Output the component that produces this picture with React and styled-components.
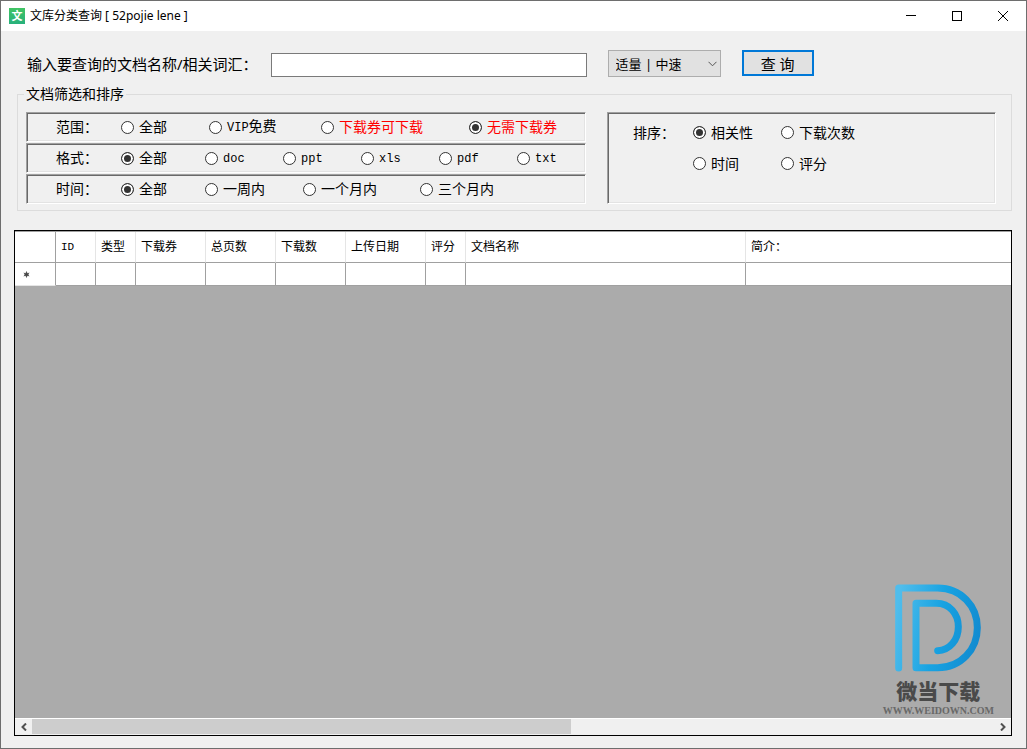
import React, { useState } from "react";
import styled, { createGlobalStyle } from "styled-components";

const scopeOptions = [
  { value: "all", label: "全部" },
  { value: "vip", latin: "VIP", label: "免费" },
  { value: "coupon", label: "下载券可下载", red: true },
  { value: "free", label: "无需下载券", red: true },
];

const formatOptions = [
  { value: "all", label: "全部" },
  { value: "doc", latin: "doc" },
  { value: "ppt", latin: "ppt" },
  { value: "xls", latin: "xls" },
  { value: "pdf", latin: "pdf" },
  { value: "txt", latin: "txt" },
];

const timeOptions = [
  { value: "all", label: "全部" },
  { value: "week", label: "一周内" },
  { value: "month", label: "一个月内" },
  { value: "quarter", label: "三个月内" },
];

const sortOptions = [
  { value: "relevance", label: "相关性" },
  { value: "downloads", label: "下载次数" },
  { value: "time", label: "时间" },
  { value: "score", label: "评分" },
];

const columns = [
  { title: "ID", width: 40, latin: true },
  { title: "类型", width: 40 },
  { title: "下载券", width: 70 },
  { title: "总页数", width: 70 },
  { title: "下载数", width: 70 },
  { title: "上传日期", width: 80 },
  { title: "评分", width: 40 },
  { title: "文档名称", width: 280 },
  { title: "简介：" },
];

export default function App() {
  const [keyword, setKeyword] = useState("");

  return (
    <>
      <GlobalStyle />
      <Window>
        <TitleBar />
        <Content>
          <SearchForm onSubmit={(e) => e.preventDefault()}>
            <SearchLabel htmlFor="keyword">
              输入要查询的文档名称/相关词汇：
            </SearchLabel>
            <SearchInput
              id="keyword"
              value={keyword}
              onChange={(e) => setKeyword(e.target.value)}
            />
            <SelectWrapper>
              <SpeedSelect aria-label="速度" defaultValue="normal">
                <option value="normal">适量 | 中速</option>
              </SpeedSelect>
              <SelectArrow viewBox="0 0 9 6">
                <path d="M0.5 0.8 L4.5 4.8 L8.5 0.8" />
              </SelectArrow>
            </SelectWrapper>
            <SearchButton type="submit">查 询</SearchButton>
          </SearchForm>

          <Filters>
            <Legend>文档筛选和排序</Legend>
            <FilterColumns>
              <FilterList>
                <FilterRow
                  name="scope"
                  label="范围："
                  options={scopeOptions}
                  initial="free"
                  tracks="65px 88px 112px 148px auto"
                />
                <FilterRow
                  name="format"
                  label="格式："
                  options={formatOptions}
                  initial="all"
                  tracks="65px 84px repeat(4, 78px) auto"
                />
                <FilterRow
                  name="time"
                  label="时间："
                  options={timeOptions}
                  initial="all"
                  tracks="65px 84px 98px 117px auto"
                />
              </FilterList>
              <SortPanel role="radiogroup" aria-label="排序">
                <RowLabel>排序：</RowLabel>
                <SortOptions>
                  <RadioList
                    name="sort"
                    options={sortOptions}
                    initial="relevance"
                  />
                </SortOptions>
              </SortPanel>
            </FilterColumns>
          </Filters>

          <ResultGrid />
        </Content>
      </Window>
    </>
  );
}

function TitleBar() {
  return (
    <Bar>
      <AppIcon>文</AppIcon>
      <Title>文库分类查询 [ 52pojie lene ]</Title>
      <WindowButton aria-label="最小化">
        <Glyph viewBox="0 0 10 10">
          <path d="M0 4.5 H10" />
        </Glyph>
      </WindowButton>
      <WindowButton aria-label="最大化">
        <Glyph viewBox="0 0 10 10">
          <rect x="0.5" y="0.5" width="9" height="9" />
        </Glyph>
      </WindowButton>
      <WindowButton aria-label="关闭">
        <Glyph viewBox="0 0 10 10">
          <path d="M0 0 L10 10 M10 0 L0 10" />
        </Glyph>
      </WindowButton>
    </Bar>
  );
}

function FilterRow({ name, label, options, initial, tracks }) {
  return (
    <FilterPanel role="radiogroup" aria-label={label} $tracks={tracks}>
      <RowLabel>{label}</RowLabel>
      <RadioList name={name} options={options} initial={initial} />
    </FilterPanel>
  );
}

function RadioList({ name, options, initial }) {
  const [selected, setSelected] = useState(initial);

  return options.map((option) => (
    <RadioLabel key={option.value} $red={option.red}>
      <Radio
        type="radio"
        name={name}
        value={option.value}
        checked={selected === option.value}
        onChange={() => setSelected(option.value)}
      />
      <span>
        {option.latin && <Latin>{option.latin}</Latin>}
        {option.label}
      </span>
    </RadioLabel>
  ));
}

function ResultGrid() {
  return (
    <GridFrame>
      <Table>
        <colgroup>
          <Col $width={41} />
          {columns.map((column) => (
            <Col key={column.title} $width={column.width} />
          ))}
        </colgroup>
        <thead>
          <tr>
            <HeadCell $corner />
            {columns.map((column) => (
              <HeadCell key={column.title} $latin={column.latin}>
                {column.title}
              </HeadCell>
            ))}
          </tr>
        </thead>
        <tbody>
          <tr>
            <Cell $rowHeader>
              <NewRowMark viewBox="0 0 7 7">
                <path d="M3.5 0.5 V6.5 M0.8 2 L6.2 5 M6.2 2 L0.8 5" />
                <circle cx="3.5" cy="3.5" r="1.6" />
              </NewRowMark>
            </Cell>
            {columns.map((column) => (
              <Cell key={column.title} />
            ))}
          </tr>
        </tbody>
      </Table>
      <GridSpace />
      <ScrollBar>
        <ScrollButton aria-label="向左滚动">
          <ScrollArrow viewBox="0 0 6 8">
            <path d="M5 0.5 L1.5 4 L5 7.5" />
          </ScrollArrow>
        </ScrollButton>
        <ScrollTrack>
          <ScrollThumb />
        </ScrollTrack>
        <ScrollButton aria-label="向右滚动">
          <ScrollArrow viewBox="0 0 6 8">
            <path d="M1 0.5 L4.5 4 L1 7.5" />
          </ScrollArrow>
        </ScrollButton>
      </ScrollBar>
      <Watermark>
        <Logo viewBox="76 43 258 262">
          <defs>
            <linearGradient
              id="logoBlue"
              gradientUnits="userSpaceOnUse"
              x1="76"
              y1="140"
              x2="334"
              y2="190"
            >
              <stop offset="0" stopColor="#50bdec" />
              <stop offset="0.5" stopColor="#18a3e2" />
              <stop offset="1" stopColor="#128bd0" />
            </linearGradient>
          </defs>
          <path d="M87 294 V54 H204 C274 54 323 108 323 173 C323 238 274 293 204 293 H139 V100 H200 C240 100 266 132 266 170 C266 210 240 241 204 242" />
        </Logo>
        <BrandName>微当下载</BrandName>
        <BrandUrl>WWW.WEIDOWN.COM</BrandUrl>
      </Watermark>
    </GridFrame>
  );
}

// STYLES
const GlobalStyle = createGlobalStyle`
  * {
    box-sizing: border-box;
  }

  body {
    margin: 0;
    background: #f0f0f0;
    color: #000;
    font-family: "Noto Sans", "Noto Sans CJK SC", sans-serif;
    font-size: 14px;
    line-height: 16px;
  }

  button, input, select {
    margin: 0;
    font-family: inherit;
    color: inherit;
  }
`;

const Window = styled.div`
  min-height: 100vh;
  display: flex;
  flex-direction: column;
  border: 1px solid #6e6e6e;
`;

// STYLES - TitleBar
const Bar = styled.header`
  display: flex;
  align-items: center;
  height: 30px;
  padding-left: 8px;
  background: #fff;
`;

const AppIcon = styled.span`
  width: 16px;
  height: 16px;
  margin-right: 5px;
  background: linear-gradient(#40c463, #27b07c);
  color: #fff;
  font-size: 11px;
  font-weight: bold;
  text-align: center;
`;

const Title = styled.h1`
  flex: 1;
  margin: 0;
  font-size: 12px;
  font-weight: normal;
`;

const WindowButton = styled.button`
  display: flex;
  align-items: center;
  justify-content: center;
  width: 46px;
  height: 28px;
  padding: 0;
  border: none;
  background: none;
`;

const Glyph = styled.svg`
  width: 10px;
  height: 10px;
  fill: none;
  stroke: #000;
`;

const Content = styled.main`
  flex: 1;
  display: flex;
  flex-direction: column;
  padding: 19px 14px 12px 13px;
`;

// STYLES - SearchForm
const SearchForm = styled.form`
  display: flex;
  align-items: center;
  gap: 21px;
  height: 27px;
  padding-left: 13px;
`;

const SearchLabel = styled.label`
  flex: none;
  font-size: 15px;
  margin-right: -8px;
`;

const SearchInput = styled.input`
  flex: 0 1 316px;
  align-self: flex-end;
  min-width: 80px;
  height: 24px;
  padding: 0 4px;
  border: 1px solid #7a7a7a;
  background: #fff;
  font-size: 14px;
  outline: none;
`;

const SelectWrapper = styled.div`
  position: relative;
  flex: none;
`;

const SpeedSelect = styled.select`
  appearance: none;
  display: block;
  width: 113px;
  height: 27px;
  padding: 0 20px 0 7px;
  border: 1px solid #adadad;
  border-radius: 0;
  background: #e1e1e1;
  font-size: 13px;
`;

const SelectArrow = styled.svg`
  position: absolute;
  top: 11px;
  right: 4px;
  width: 9px;
  height: 6px;
  fill: none;
  stroke: #555;
  pointer-events: none;
`;

const SearchButton = styled.button`
  flex: none;
  align-self: flex-start;
  width: 72px;
  height: 26px;
  padding: 0;
  border: 2px solid #0078d7;
  background: #e1e1e1;
  font-size: 15px;
`;

// STYLES - Filters
const Filters = styled.fieldset`
  min-width: 0;
  margin: 9px 0 19px 3px;
  padding: 10px 15px 6px 8px;
  border: 1px solid #dcdcdc;
`;

const Legend = styled.legend`
  margin-left: -2px;
  padding: 0 2px;
`;

const FilterColumns = styled.div`
  display: flex;
  gap: 21px;
`;

const FilterList = styled.div`
  flex: none;
  width: 560px;
  display: flex;
  flex-direction: column;
  gap: 1px;
`;

const SunkenPanel = styled.div`
  border: 1px solid;
  border-color: #a0a0a0 #fff #fff #a0a0a0;
  box-shadow: inset 1px 1px #696969, inset -1px -1px #e3e3e3;
`;

const FilterPanel = styled(SunkenPanel)`
  display: grid;
  grid-template-columns: ${(props) => props.$tracks};
  align-items: center;
  height: 30px;
  padding-left: 29px;
`;

const SortPanel = styled(SunkenPanel)`
  flex: 1;
  display: grid;
  grid-template-columns: 60px auto;
  align-items: start;
  padding: 4px 0 0 25px;
  line-height: 31px;
`;

const SortOptions = styled.div`
  display: grid;
  grid-template-columns: 88px auto;
`;

const RowLabel = styled.span`
  white-space: nowrap;
`;

const RadioLabel = styled.label`
  display: flex;
  align-items: center;
  gap: 5px;
  white-space: nowrap;
  color: ${(props) => (props.$red ? "#f00" : "inherit")};
`;

const Radio = styled.input`
  appearance: none;
  flex: none;
  width: 13px;
  height: 13px;
  border: 1px solid #333;
  border-radius: 50%;
  background: #fff;

  &:checked {
    background: #333;
    box-shadow: inset 0 0 0 2px #fff;
  }
`;

const Latin = styled.span`
  font-family: "Liberation Mono", monospace;
  font-size: 12px;
`;

// STYLES - ResultGrid
const GridFrame = styled.section`
  position: relative;
  flex: 1;
  display: flex;
  flex-direction: column;
  border: 1px solid #000;
  background: #ababab;
`;

const Table = styled.table`
  width: 100%;
  table-layout: fixed;
  border-collapse: separate;
  border-spacing: 0;
  border-top: 1px solid #a0a0a0;
  background: #fff;
  font-size: 12px;
`;

const Col = styled.col`
  width: ${(props) => (props.$width ? props.$width + "px" : "auto")};
`;

const HeadCell = styled.th`
  height: 31px;
  padding: 0 0 0 5px;
  border-right: 1px solid ${(props) => (props.$corner ? "#a0a0a0" : "#e5e5e5")};
  border-bottom: 1px solid #a0a0a0;
  font-family: ${(props) =>
    props.$latin ? '"Liberation Mono", monospace' : "inherit"};
  font-size: ${(props) => (props.$latin ? "11px" : "12px")};
  font-weight: normal;
  text-align: left;
  white-space: nowrap;

  &:last-child {
    border-right: none;
  }
`;

const Cell = styled.td`
  height: 23px;
  padding: 0 0 0 8px;
  border-right: 1px solid #a0a0a0;
  border-bottom: 1px solid ${(props) => (props.$rowHeader ? "#e5e5e5" : "#a0a0a0")};

  &:last-child {
    border-right: none;
  }
`;

const NewRowMark = styled.svg`
  display: block;
  width: 7px;
  height: 7px;
  fill: #444;
  stroke: #555;
`;

const GridSpace = styled.div`
  flex: 1;
`;

const ScrollBar = styled.div`
  display: flex;
  height: 17px;
  border-top: 1px solid #fff;
  background: #f0f0f0;
`;

const ScrollButton = styled.button`
  flex: none;
  display: flex;
  align-items: center;
  justify-content: center;
  width: 17px;
  padding: 0;
  border: none;
  background: none;
`;

const ScrollArrow = styled.svg`
  width: 6px;
  height: 8px;
  fill: none;
  stroke: #505050;
  stroke-width: 2;
`;

const ScrollTrack = styled.div`
  flex: 1;
  padding-bottom: 1px;
`;

const ScrollThumb = styled.div`
  width: 56%;
  height: 100%;
  background: #cdcdcd;
`;

const Watermark = styled.div`
  position: absolute;
  right: 17px;
  bottom: 16px;
  display: flex;
  flex-direction: column;
  align-items: center;
`;

const Logo = styled.svg`
  width: 86px;
  height: 88px;
  fill: none;
  stroke: url(#logoBlue);
  stroke-width: 21;
  stroke-linecap: round;
  stroke-linejoin: round;
`;

const BrandName = styled.span`
  margin-top: 7px;
  color: #4a4a4a;
  font-size: 21px;
  font-weight: 900;
  line-height: 24px;
`;

const BrandUrl = styled.span`
  color: #686868;
  font-family: "Liberation Serif", serif;
  font-size: 10px;
  font-weight: bold;
`;
